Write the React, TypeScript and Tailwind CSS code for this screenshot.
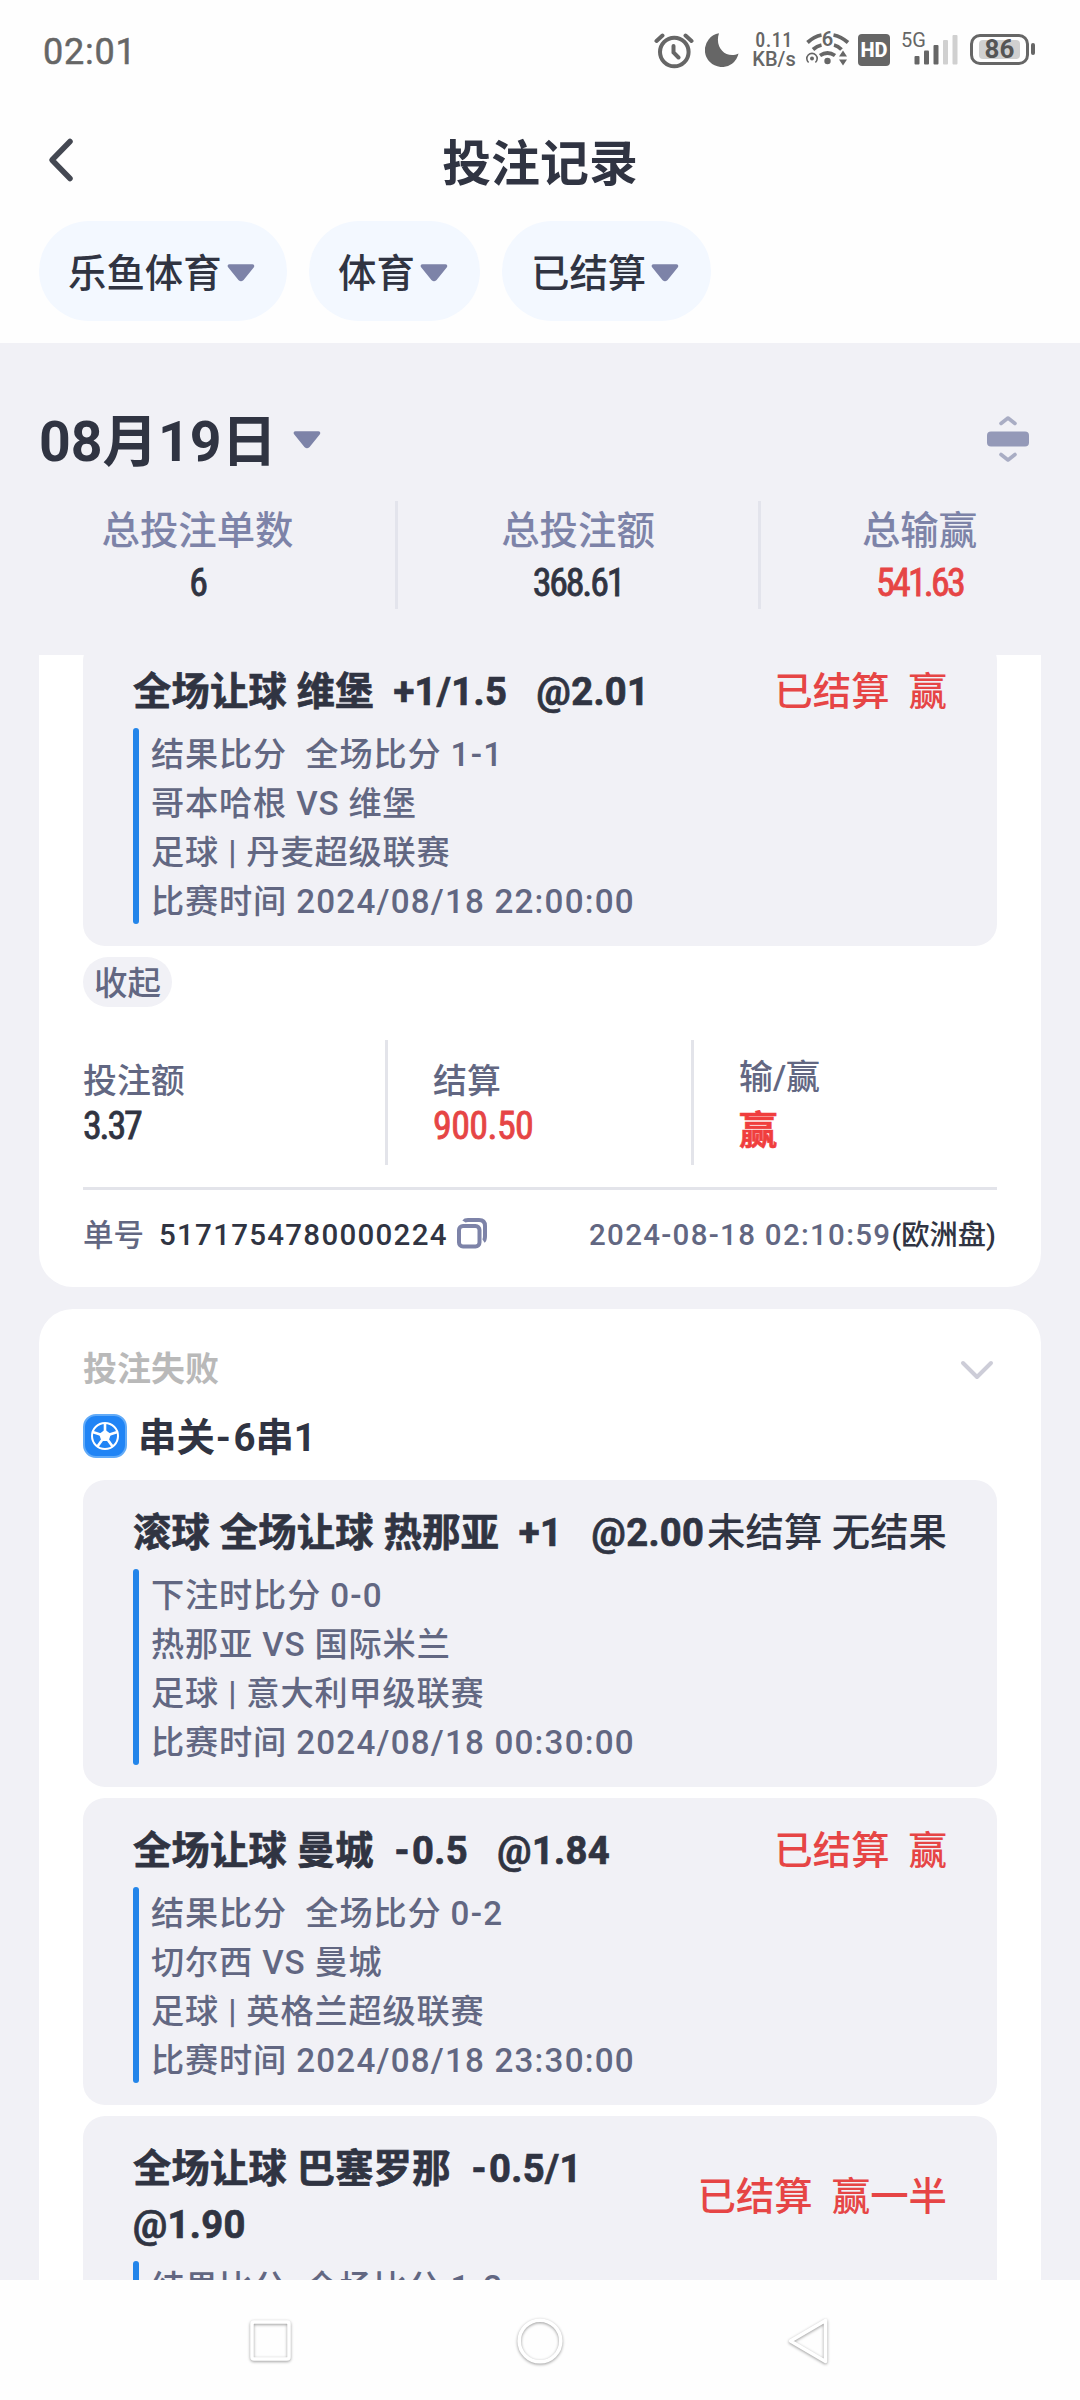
import React from "react";

function Caret() {
  return (
    <svg width="28" height="18" viewBox="0 0 28 18" className="shrink-0">
      <path d="M2.500 2H25.500L15 15Q14 16 13 15Z" fill="#7d83a8" stroke="#7d83a8" strokeWidth="3.600" strokeLinejoin="round" />
    </svg>
  );
}

function StatusBar() {
  return (
    <div className="flex h-[98px] shrink-0 items-start pl-[43px] text-[#666]">
      <span className="mt-[29px] w-[611px] shrink-0 text-[36px] leading-[46px] tracking-[0.800px] [font-stretch:88%] [-webkit-text-stroke:0.5px]">02:01</span>
      <svg width="40" height="40" viewBox="0 0 40 40" className="mt-[31px] shrink-0" fill="none" stroke="#666" strokeWidth="4" strokeLinecap="round">
        <circle cx="20.300" cy="21" r="14.300" />
        <path d="M19.500 15V21.500L24.500 26.500M2.500 10L8.500 4.500M31.500 4.500L37.500 10" />
      </svg>
      <svg width="34" height="34" viewBox="0 0 34 34" className="mt-[33px] ml-[11px] shrink-0" fill="#666">
        <path d="M14 0.300A17 17 0 1 0 33.500 20.500C22 26.500 9 15 14 0.300Z" />
      </svg>
      <div className="mt-[31px] ml-[15px] flex w-[40px] shrink-0 flex-col items-center text-[20px] leading-[19px] font-medium whitespace-nowrap">
        <span className="tracking-[0.500px] [font-stretch:85%]">0.11</span>
        <span className="[font-stretch:88%]">KB/s</span>
      </div>
      <svg width="44" height="38" viewBox="0 0 44 38" className="mt-[30px] ml-[12px] shrink-0 overflow-visible" fill="none" stroke="#666" strokeWidth="3.800">
        <path d="M1.500 12.500Q8 6.500 15.500 5M27.500 5Q35 6.500 42 12.500M7 19.500Q11 16 15.500 15M28 15Q32 16 35.500 19.500M14 25.500Q21.500 20.500 29 25.500" />
        <circle cx="21.500" cy="31" r="3.200" fill="#666" stroke="none" />
        <path d="M2.600 32.500A5.200 5.200 0 1 1 9.400 32.500" strokeWidth="1.600" />
        <circle cx="6" cy="28.500" r="2" fill="#666" stroke="none" />
        <path d="M33 26.500L37 20.500L41 26.500ZM33 29.500L37 35.500L41 29.500Z" fill="#666" stroke="none" />
        <text x="21.500" y="16" textAnchor="middle" fontSize="20" fontWeight="600" fill="#666" stroke="none">6</text>
      </svg>
      <div className="mt-[34px] ml-[8px] flex h-[32px] w-[32px] shrink-0 items-center justify-center rounded-[4px] bg-[#666] text-[20px] font-extrabold text-white">HD</div>
      <span className="mt-[30px] ml-[11px] w-[26px] shrink-0 text-[20px] leading-[20px]">5G</span>
      <svg width="46" height="32" viewBox="0 0 46 32" className="mt-[33px] -ml-[13px] shrink-0" fill="#666">
        <rect x="0.500" y="23" width="5" height="8.500" rx="1" />
        <rect x="10" y="17.500" width="5" height="14" rx="1" />
        <rect x="19.500" y="12" width="5" height="19.500" rx="1" />
        <rect x="29" y="7" width="5" height="24.500" rx="1" fill="#d0d0d0" />
        <rect x="38.500" y="2" width="5" height="29.500" rx="1" fill="#d0d0d0" />
      </svg>
      <div className="mt-[34px] ml-[10px] flex h-[31px] w-[59px] shrink-0 items-center justify-center rounded-[10px] border-[3px] border-[#666]">
        <div className="flex h-[19px] w-[41px] items-center justify-center rounded-[4px] bg-[#d0d0d0] text-[26px] leading-[19px] font-bold text-[#555]">86</div>
      </div>
      <div className="mt-[43px] ml-[2px] h-[12px] w-[4px] rounded-[2px] bg-[#666]" />
    </div>
  );
}

function Pill({ label, w }: { label: string; w: string }) {
  return (
    <div className={"flex h-[100px] items-center rounded-full bg-[#f3f8ff] pt-[3px] pl-[29px] text-[38.400px] font-medium text-[#303442] " + w}>
      <span className="mr-[5px] pt-[2px] leading-[56px]">{label}</span>
      <Caret />
    </div>
  );
}

// Sets hyphens with wider spacing than the surrounding heading text.
function Heading({ text }: { text: string }) {
  return (
    <>
      {text.split(/(-)/).map((p, i) => (
        <span key={i} className={p === "-" ? "ml-[1px] tracking-[2.500px]" : ""}>{p}</span>
      ))}
    </>
  );
}

// Sets numbers, scores and timestamps slightly wider than the Chinese text.
function Detail({ text }: { text: string }) {
  return (
    <div className="h-[49px]">
      {text.split(/(\d[\d/:\- ]*)/).map((p, i) => (
        <span key={i} className={i % 2 ? "tracking-[1.200px]" : ""}>{p}</span>
      ))}
    </div>
  );
}

type BetProps = { title: string; status: string; red?: boolean; lines: string[] };

function Bet({ title, status, red, lines }: BetProps) {
  return (
    <div className="rounded-[22px] bg-[#f1f1f6] px-[50px] pt-[25px] pb-[22px]">
      <div className="flex items-center justify-between text-[38.400px] leading-[56px] whitespace-pre text-[#303442]">
        <span className="text-[38.200px] font-bold tracking-[0.320px] [-webkit-text-stroke:0.7px]"><Heading text={title} /></span>
        <span className={red ? "font-medium text-[#e64545]" : "font-medium"}>{status}</span>
      </div>
      <div className="mt-[8px] flex text-[33.200px] leading-[49px] font-medium tracking-[0.850px] whitespace-pre text-[#626782]">
        <span className="mr-[12px] w-[6px] rounded-full bg-[#2385ea]" />
        <div className="relative top-[2px]">
          {lines.map((l) => <Detail key={l} text={l} />)}
        </div>
      </div>
    </div>
  );
}

function Total({ label, value, cls }: { label: string; value: string; cls: string }) {
  return (
    <div className={"flex h-[108px] flex-col items-center border-[#e3e4ec] pt-[2px] " + cls}>
      <span className="text-[38.400px] leading-[56px] font-medium text-[#7d83a8]">{label}</span>
      <span className="text-[38px] leading-[48px] tracking-[-2.200px] [font-stretch:75%] [-webkit-text-stroke:0.8px]">{value}</span>
    </div>
  );
}

export default function App() {
  return (
    <div className="flex h-[2400px] w-[1080px] flex-col overflow-hidden bg-[#fefefe] font-['Roboto','Noto_Sans_CJK_SC',sans-serif]">
      <StatusBar />
      <div className="flex h-[123px] shrink-0 items-center pt-[6px] pl-[47px]">
        <svg width="28" height="46" viewBox="0 0 28 46" className="-mt-[6px] shrink-0" fill="none" stroke="#444852" strokeWidth="5.500" strokeLinecap="round" strokeLinejoin="round">
          <path d="M23 4.500L5 23L23 41.500" />
        </svg>
        <span className="flex-1 pt-[5px] pr-[75px] text-center text-[48.900px] font-bold text-[#303442]">投注记录</span>
      </div>
      <div className="flex h-[122px] shrink-0 gap-[22px] pl-[39px]">
        <Pill label="乐鱼体育" w="w-[248px]" />
        <Pill label="体育" w="w-[171px]" />
        <Pill label="已结算" w="w-[209px]" />
      </div>

      <div className="h-[312px] shrink-0 bg-[#f1f1f6] pt-[58px]">
        <div className="flex h-[80px] items-center pr-[51px] pl-[39px]">
          <span className="pt-[3px] text-[55.400px] leading-[80px] font-bold text-[#303442]">08月19日</span>
          <span className="mt-[-2px] ml-[16px] flex"><Caret /></span>
          <svg width="42" height="46" viewBox="0 0 42 46" className="-mt-[4px] ml-auto" fill="none" stroke="#a9adc4" strokeWidth="3.600" strokeLinecap="round" strokeLinejoin="round">
            <path d="M14 7.500L21 2L28 7.500M14 38.500L21 44L28 38.500" />
            <rect y="15.500" width="42" height="15" rx="4" fill="#9499b8" stroke="none" />
          </svg>
        </div>
        <div className="mt-[20px] flex text-[#303442]">
          <Total label="总投注单数" value="6" cls="w-[398px] border-r-[3px]" />
          <Total label="总投注额" value="368.61" cls="w-[363px] border-r-[3px]" />
          <Total label="总输赢" value="541.63" cls="flex-1 pr-[2px] [&>span:last-child]:tracking-[-2.800px] [&>span:last-child]:text-[#e64545]" />
        </div>
      </div>

      <div className="h-[1625px] shrink-0 overflow-hidden bg-[#f1f1f6] px-[39px]">
        <div className="-mt-[16px] h-[648px] rounded-b-[34px] bg-white px-[44px]">
          <Bet title="全场让球 维堡  +1/1.5   @2.01" status="已结算  赢" red lines={["结果比分  全场比分 1-1", "哥本哈根 VS 维堡", "足球 | 丹麦超级联赛", "比赛时间 2024/08/18 22:00:00"]} />
          <div className="mt-[11px] flex h-[50px] w-[89px] items-center justify-center rounded-[25px] bg-[#f1f1f6] pt-[5px] text-[33.500px] font-medium text-[#626782]">收起</div>
          <div className="mt-[33px] flex h-[125px] text-[33.900px] font-medium text-[#626782]">
            <div className="w-[305px] border-r-[3px] border-[#e3e4ea] pt-[17px]">
              <div className="h-[47px] leading-[50px]">投注额</div>
              <div className="text-[38px] leading-[45px] font-normal tracking-[-2.200px] text-[#303442] [font-stretch:75%] [-webkit-text-stroke:0.8px]">3.37</div>
            </div>
            <div className="w-[306px] border-r-[3px] border-[#e3e4ea] pt-[17px] pl-[45px]">
              <div className="h-[47px] leading-[50px]">结算</div>
              <div className="text-[38px] leading-[45px] font-normal tracking-[-0.600px] text-[#e64545] [font-stretch:75%] [-webkit-text-stroke:0.8px]">900.50</div>
            </div>
            <div className="pt-[13px] pl-[45px]">
              <div className="h-[51px] leading-[50px]">输/赢</div>
              <div className="text-[38.400px] leading-[54px] font-bold text-[#f03e3e] [-webkit-text-stroke:0.6px]">赢</div>
            </div>
          </div>
          <div className="mt-[22px] h-[3px] bg-[#e3e4ea]" />
          <div className="mt-[22px] flex h-[46px] items-center text-[29.500px] leading-[46px] font-medium text-[#303442]">
            <span className="mr-[15px] pt-[2px] text-[30.500px] text-[#626782]">单号</span>
            <span className="tracking-[1.280px]">5171754780000224</span>
            <svg width="30" height="31" viewBox="0 0 30 31" className="mt-[-4px] ml-[9px]" fill="none" stroke="#7d83a8" strokeWidth="4">
              <path d="M7 3.500Q8 2 11 2H22Q28 2 28 8V18Q28 22 26.500 23" />
              <rect x="2" y="8" width="20.500" height="20.500" rx="4" />
            </svg>
            <span className="ml-auto tracking-[1.300px] text-[#626782]">2024-08-18 02:10:59</span>
            <span className="pr-[1px] pt-[2px] text-[28.300px]">(欧洲盘)</span>
          </div>
        </div>

        <div className="mt-[22px] h-[1100px] rounded-t-[34px] bg-white px-[44px] pt-[31px]">
          <div className="flex h-[56px] items-center justify-between text-[34px] font-bold text-[#b9b9b9]">
            <span className="pt-[3px]">投注失败</span>
            <svg width="34" height="22" viewBox="0 0 34 22" className="mt-[3px] mr-[3px]" fill="none" stroke="#cdcdd8" strokeWidth="4" strokeLinecap="round" strokeLinejoin="round">
              <path d="M3 4L17 18L31 4" />
            </svg>
          </div>
          <div className="mt-[9px] flex h-[62px] items-center text-[38.400px] font-bold text-[#303442]">
            <svg width="44" height="44" viewBox="0 0 44 44" className="mr-[11px]">
              <rect x="1" y="1" width="42" height="42" rx="12" fill="#2084f5" stroke="#62abf8" strokeWidth="2" />
              <circle cx="22" cy="22" r="13" fill="none" stroke="#fff" strokeWidth="2" />
              <path d="M22 15.800L27.900 20.100L25.600 27H18.400L16.100 20.100Z" fill="#fff" />
              <path d="M22 22V9M22 22L34.400 18M22 22L29.600 32.500M22 22L14.400 32.500M22 22L9.600 18" stroke="#fff" strokeWidth="2.600" />
            </svg>
            <span className="pt-[4px]"><Heading text="串关-6串1" /></span>
          </div>
          <div className="mt-[13px] flex flex-col gap-[11px]">
            <Bet title="滚球 全场让球 热那亚  +1   @2.00" status="未结算 无结果" lines={["下注时比分 0-0", "热那亚 VS 国际米兰", "足球 | 意大利甲级联赛", "比赛时间 2024/08/18 00:30:00"]} />
            <Bet title="全场让球 曼城  -0.5   @1.84" status="已结算  赢" red lines={["结果比分  全场比分 0-2", "切尔西 VS 曼城", "足球 | 英格兰超级联赛", "比赛时间 2024/08/18 23:30:00"]} />
            <Bet title={"全场让球 巴塞罗那  -0.5/1\n@1.90"} status="已结算  赢一半" red lines={["结果比分  全场比分 1-2"]} />
          </div>
        </div>
      </div>

      <div className="flex flex-1 items-center justify-center gap-[222px] bg-[#fefefe] pt-[2px]">
        <svg width="44" height="50" viewBox="0 0 44 50" className="drop-shadow-[0_1px_1.5px_rgba(0,0,0,0.4)]" fill="none" stroke="#fff" strokeWidth="3.500">
          <rect x="3" y="6" width="37" height="37" rx="2" />
        </svg>
        <svg width="50" height="50" viewBox="0 0 50 50" className="drop-shadow-[0_1px_1.5px_rgba(0,0,0,0.4)]" fill="none" stroke="#fff" strokeWidth="3.500">
          <circle cx="25" cy="25" r="20.800" />
        </svg>
        <svg width="44" height="50" viewBox="0 0 44 50" className="drop-shadow-[0_1px_1.5px_rgba(0,0,0,0.4)]" fill="none" stroke="#fff" strokeWidth="3.500" strokeLinejoin="round">
          <path d="M3.500 25L38.500 4.500V45.500Z" />
        </svg>
      </div>
    </div>
  );
}
